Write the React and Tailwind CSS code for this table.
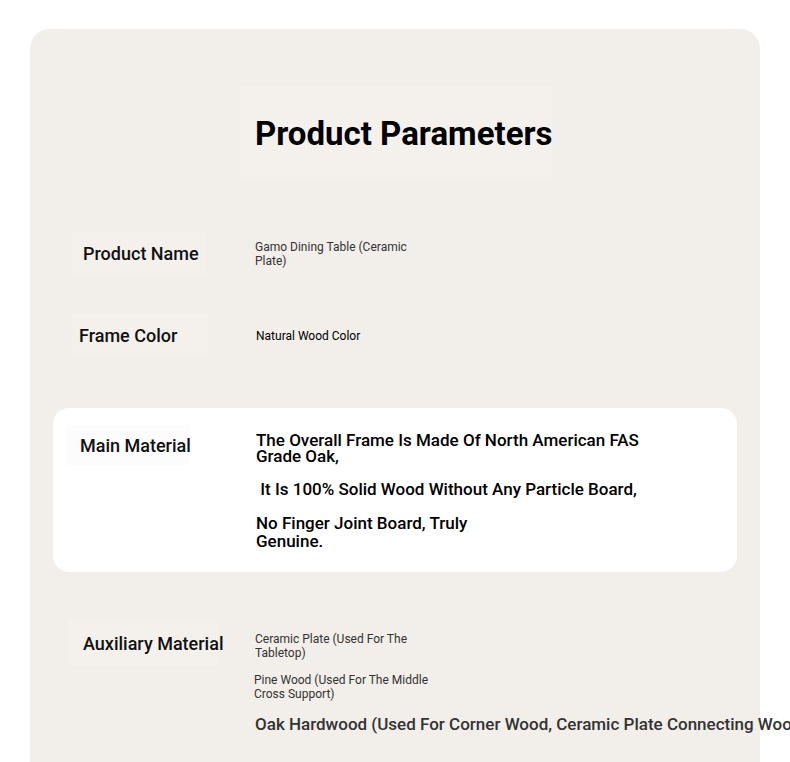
const font = { fontFamily: "Roboto, 'Noto Sans', sans-serif" };

const Label = ({ children, className = "" }) => (
  <div className={`flex shrink-0 items-center whitespace-nowrap bg-[#f4f1ed] text-[18px] font-medium text-[#111] ${className}`}>
    {children}
  </div>
);

export default function App() {
  return (
    <div className="min-h-screen bg-white pt-[29px] pl-[30px]" style={font}>
      <div className="w-[730px] min-h-[800px] rounded-[20px] bg-[#f2eee9] pb-10">
        {/* title */}
        <div className="pt-[57px]">
          <div className="ml-[210px] flex h-[94px] w-[312px] items-center bg-[#f4f1ed] pl-[15px]">
            <h1 className="whitespace-nowrap text-[33px] font-bold leading-none text-black">
              Product Parameters
            </h1>
          </div>
        </div>

        {/* product name */}
        <div className="mt-[52px] flex h-[43px] items-center">
          <Label className="ml-[42px] h-[43px] w-[133px] pl-[11px]">Product Name</Label>
          <div className="ml-[50px] w-[180px] text-[12px] leading-[14px] text-[#333]">
            Gamo Dining Table (Ceramic Plate)
          </div>
        </div>

        {/* frame color */}
        <div className="mt-[39px] flex h-[43px] items-center">
          <Label className="ml-[42px] h-[43px] w-[136px] pl-[7px]">Frame Color</Label>
          <div className="ml-[48px] text-[12px] leading-[14px] text-black">
            Natural Wood Color
          </div>
        </div>

        {/* main material */}
        <div className="mx-[23px] mt-[51px] flex rounded-[16px] bg-white pt-[17px] pb-[22px]">
          <Label className="ml-[12px] h-[40px] w-[124px] self-start bg-[#fcfcfc] pl-[15px]">
            Main Material
          </Label>
          <div className="ml-[67px] flex flex-col gap-4 pt-[7px] text-[17px] font-medium text-black">
            <p className="w-[400px] leading-[16px]">
              The Overall Frame Is Made Of North American FAS Grade Oak,
            </p>
            <p className="leading-[18px]">&nbsp;It Is 100% Solid Wood Without Any Particle Board,</p>
            <p className="w-[230px] leading-[18px]">
              No Finger Joint Board, Truly Genuine.
            </p>
          </div>
        </div>

        {/* auxiliary material */}
        <div className="mt-[48px] flex items-start">
          <Label className="ml-[38px] h-[46px] w-[150px] pl-[15px]">Auxiliary Material</Label>
          <div className="ml-[37px] flex flex-col gap-[13px] pt-[12px] text-[#333]">
            <p className="w-[180px] text-[12px] leading-[14px]">
              Ceramic Plate (Used For The Tabletop)
            </p>
            <p className="-ml-px w-[180px] text-[12px] leading-[14px]">
              Pine Wood (Used For The Middle Cross Support)
            </p>
            <p className="whitespace-nowrap text-[17px] leading-[20px] font-medium text-[#333]">
              Oak Hardwood (Used For Corner Wood, Ceramic Plate Connecting Wood)
            </p>
          </div>
        </div>
      </div>
    </div>
  );
}
